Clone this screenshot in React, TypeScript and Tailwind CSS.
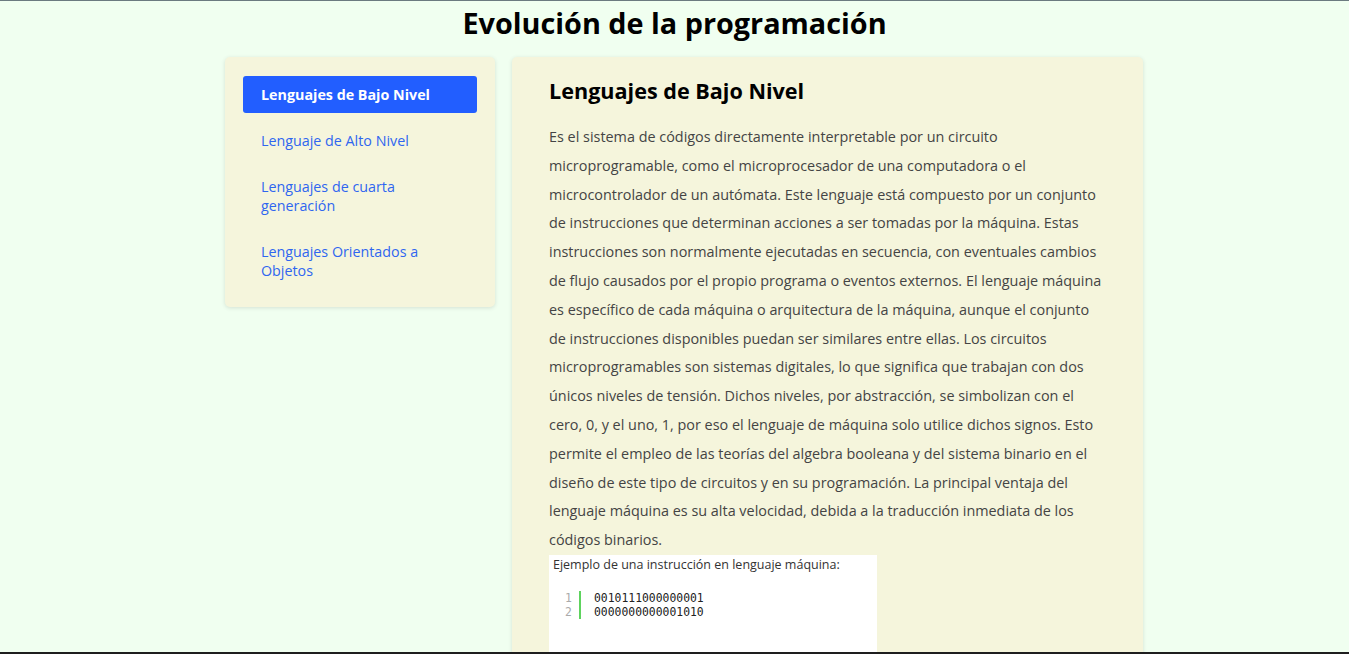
import React from "react";

const items = [
  "Lenguajes de Bajo Nivel",
  "Lenguaje de Alto Nivel",
  "Lenguajes de cuarta generación",
  "Lenguajes Orientados a Objetos",
];

const texto =
  "Es el sistema de códigos directamente interpretable por un circuito microprogramable, como el microprocesador de una computadora o el microcontrolador de un autómata. Este lenguaje está compuesto por un conjunto de instrucciones que determinan acciones a ser tomadas por la máquina. Estas instrucciones son normalmente ejecutadas en secuencia, con eventuales cambios de flujo causados por el propio programa o eventos externos. El lenguaje máquina es específico de cada máquina o arquitectura de la máquina, aunque el conjunto de instrucciones disponibles puedan ser similares entre ellas. Los circuitos microprogramables son sistemas digitales, lo que significa que trabajan con dos únicos niveles de tensión. Dichos niveles, por abstracción, se simbolizan con el cero, 0, y el uno, 1, por eso el lenguaje de máquina solo utilice dichos signos. Esto permite el empleo de las teorías del algebra booleana y del sistema binario en el diseño de este tipo de circuitos y en su programación. La principal ventaja del lenguaje máquina es su alta velocidad, debida a la traducción inmediata de los códigos binarios.";

function CodeExample() {
  return (
    <div className="w-[328px] h-[120px] bg-white pl-[4px] pt-[1px]">
      <p className="text-[12.5px] leading-[17px] text-[#333]">
        Ejemplo de una instrucción en lenguaje máquina:
      </p>
      <div className="mt-[18px] flex pl-[12px] font-['DejaVu_Sans_Mono',monospace] text-[11.4px] leading-[14px]">
        <div className="w-[12px] text-[#aaa]">
          <div>1</div>
          <div>2</div>
        </div>
        <div className="ml-[2px] w-[2px] bg-[#5ed35e]" />
        <div className="ml-[13px] text-[#222]">
          <div>0010111000000001</div>
          <div>0000000000001010</div>
        </div>
      </div>
    </div>
  );
}

export default function App() {
  return (
    <div className="min-h-screen border-t border-[#6b7b80] bg-[#f0fff0] font-['Open_Sans',sans-serif]">
      <h1 className="pt-[2px] text-center text-[28.8px] leading-[40px] font-bold text-black">
        Evolución de la programación
      </h1>

      <div className="mt-[14px] ml-[225px] flex items-start gap-[17px]">
        <nav className="w-[270px] rounded-[5px] bg-[#f5f5dc] px-[18px] pt-[19px] pb-[18px] shadow-[0_1px_4px_rgba(0,0,0,0.12)]">
          <ul className="flex flex-col gap-[9px]">
            {items.map((item, i) => (
              <li key={item}>
                <a
                  href="#"
                  className={
                    i === 0
                      ? "block rounded-[3px] bg-[#225eff] px-[18px] py-[9px] text-[14.3px] leading-[19px] font-bold text-white"
                      : "block px-[18px] py-[9px] text-[14.3px] leading-[19px] text-[#2f66f0]"
                  }
                >
                  {item}
                </a>
              </li>
            ))}
          </ul>
        </nav>

        <main className="w-[631px] rounded-[5px] bg-[#f5f5dc] px-[37px] pt-[18px] pb-[24px] shadow-[0_1px_4px_rgba(0,0,0,0.12)]">
          <h2 className="text-[21.6px] leading-[32px] font-bold text-black">
            Lenguajes de Bajo Nivel
          </h2>
          <p className="mt-[16px] text-[14.4px] leading-[28.8px] text-[#444]">
            {texto}
          </p>
          <CodeExample />
        </main>
      </div>

      <div className="fixed bottom-0 left-0 right-0 h-[2px] bg-[#1e1e1e]" />
    </div>
  );
}
